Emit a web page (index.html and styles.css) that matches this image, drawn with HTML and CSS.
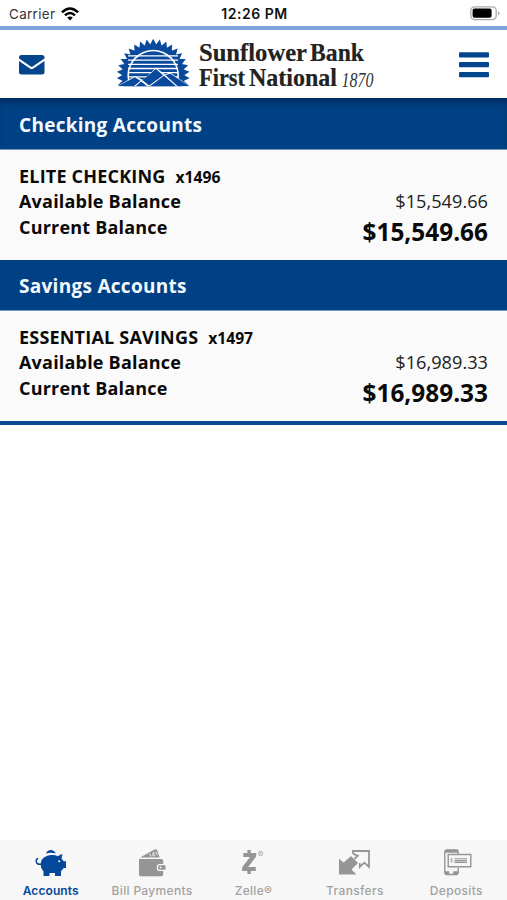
FILE: index.html
```html
<!DOCTYPE html>
<html lang="en">
<head>
<meta charset="utf-8">
<title>Accounts</title>
<link rel="stylesheet" href="styles.css">
</head>
<body>
<div class="app">
  <div class="status">
    <div class="carrier"><span>Carrier</span>
      <svg width="18" height="14" viewBox="0 0 18 14" fill="none" stroke="#000" stroke-width="2.4"><path d="M.9 5.3Q9-2.5 17.1 5.3M4 8.4Q9 3.7 14 8.4"/><path d="M6.2 10.6Q9 8.2 11.8 10.6L9 13.5Z" fill="#000" stroke="none"/></svg>
    </div>
    <div class="time">12:26 PM</div>
    <svg class="battery" width="30" height="15" viewBox="0 0 30 15"><rect x=".8" y=".8" width="25.4" height="12.8" rx="3.8" fill="#fff" stroke="#aaa" stroke-width="1.3"/><rect x="2.6" y="2.6" width="19" height="9.2" rx="2" fill="#000"/><path d="M28 5Q31 7.2 28 9.5Z" fill="#aaa"/></svg>
  </div>
  <header class="header">
    <svg class="mail" width="26" height="20" viewBox="0 0 26 20" fill="#04468e"><path d="M0 2.5Q0 0 2.5 0H23Q25.5 0 25.5 2.5V3.5L13.7 11.5Q12.7 12 11.8 11.5L0 3.5Z"/><path d="M0 6L11 13.5Q12.7 14.5 14.4 13.5L25.5 6V17Q25.5 19.5 23 19.5H2.5Q0 19.5 0 17Z"/></svg>
    <svg class="logo" width="270" height="56" viewBox="114 36 270 56">
      <defs>
        <path id="t" d="M149.6 46L153.2 39L156.8 46Z"/>
        <g id="fan"><use href="#t"/><use href="#t" transform="rotate(10.5 153.2 75.5)"/><use href="#t" transform="rotate(21 153.2 75.5)"/><use href="#t" transform="rotate(31.5 153.2 75.5)"/><use href="#t" transform="rotate(42 153.2 75.5)"/><use href="#t" transform="rotate(52.5 153.2 75.5)"/><use href="#t" transform="rotate(63 153.2 75.5)"/><use href="#t" transform="rotate(73.5 153.2 75.5)"/><use href="#t" transform="rotate(84 153.2 75.5)"/><use href="#t" transform="rotate(94.5 153.2 75.5)"/><use href="#t" transform="rotate(105 153.2 75.5)"/></g>
        <clipPath id="base"><path d="M114 36H194V86.3H114Z"/></clipPath>
      </defs>
      <g clip-path="url(#base)" fill="#0a4a9c">
        <use href="#fan"/><use href="#fan" transform="translate(306.4 0) scale(-1 1)"/>
        <circle cx="153.2" cy="75.5" r="31"/>
        <circle cx="153.2" cy="75.5" r="25.8" fill="#fff"/>
        <circle cx="153.2" cy="75.5" r="24.2"/>
        <path d="M128 55.9H178M128 60.1H178M128 64.3H178M128 68.5H178M128 72.7H178M128 76.9H178" stroke="#fff" stroke-width="1.3"/>
        <path d="M115 87.5L135 76L143 80L156 67.7L165 74.5L170 72.6L192 87.5Z" fill="#fff"/>
        <path d="M117 86.5L134.8 77.3L140.5 80.7L133.5 86.5ZM135.2 86.5L141.2 81.6L147.5 86.5ZM142.5 80.2L155.8 68.9L163.2 75.2L149.2 85.4ZM149.6 86.5L164 75.8L176.4 86.5ZM165.3 75.1L170.5 73.8L190 86.5H178Z"/>
      </g>
      <g class="wordmark">
        <text x="199" y="61" textLength="108" lengthAdjust="spacingAndGlyphs">Sunflower</text>
        <text x="310" y="61" textLength="54" lengthAdjust="spacingAndGlyphs">Bank</text>
        <text x="199" y="86" textLength="46" lengthAdjust="spacingAndGlyphs">First</text>
        <text x="249" y="86" textLength="88" lengthAdjust="spacingAndGlyphs">National</text>
      </g>
      <text class="year" x="341.5" y="87" textLength="32" lengthAdjust="spacingAndGlyphs">1870</text>
    </svg>
    <svg class="menu" width="30" height="26" viewBox="0 0 30 26" fill="#04468e"><rect y=".2" width="30" height="5.3" rx="1"/><rect y="10" width="30" height="5.3" rx="1"/><rect y="19.9" width="30" height="5.3" rx="1"/></svg>
  </header>
  <main>
    <h2 class="first">Checking Accounts</h2>
    <section class="account">
      <div class="name">ELITE CHECKING <small>x1496</small></div>
      <div class="row"><span>Available Balance</span><span class="available">$15,549.66</span></div>
      <div class="row"><span>Current Balance</span><span class="current">$15,549.66</span></div>
    </section>
    <h2>Savings Accounts</h2>
    <section class="account last">
      <div class="name">ESSENTIAL SAVINGS <small>x1497</small></div>
      <div class="row"><span>Available Balance</span><span class="available">$16,989.33</span></div>
      <div class="row"><span>Current Balance</span><span class="current">$16,989.33</span></div>
    </section>
  </main>
  <nav class="tabs">
    <div class="tab active">
      <svg width="32" height="30" viewBox="0 0 32 30"><path fill="currentColor" d="M11 5.5A5 5 0 0 1 20.6 5.5Q15.5 3.8 11 5.5ZM7 11.5Q10 7.5 15.8 7Q20 6.5 23 8.2Q25 6.5 27.5 6.3L26.5 10.5L28.7 13.3H31V20H28.7Q27.5 22 26 23V28H20V25H14.5V28H8.5V23.3Q5.3 20 5.8 15Q6 13 7 11.5Z"/><path d="M6.5 16Q1.2 17 1.2 13Q1.2 10.5 3.3 10.6" fill="none" stroke="currentColor" stroke-width="1.5"/><circle cx="24.2" cy="13.3" r="1" fill="#f8f8f8"/></svg>
      <span>Accounts</span>
    </div>
    <div class="tab">
      <svg width="32" height="30" viewBox="0 0 32 30"><path fill="currentColor" d="M4 9.5L18.5 1.5Q20.5 .8 21.3 2.5L23.7 9.5ZM3 11H25.5Q27.2 11 27.2 12.8V16H23Q20.8 16 20.8 18.5V20.5Q20.8 23 23 23H27.2V26.5Q27.2 28.3 25.5 28.3H4.5Q3 28.3 3 26.5Z"/><path fill="currentColor" d="M23.5 17.2H29.5V21.8H23.5Q22 21.8 22 19.5Q22 17.2 23.5 17.2Z"/><circle cx="24.5" cy="19.5" r="1" fill="#f8f8f8"/><path d="M13.5 5.5L15 8.5M16.5 5L18 4.5L18 6.3L16.8 6.5L17.2 8L19 7.5M20 3.8L21.2 7.2" stroke="#eee" stroke-width="1" fill="none"/></svg>
      <span>Bill Payments</span>
    </div>
    <div class="tab">
      <svg class="zelle" width="32" height="30" viewBox="0 0 32 30"><path fill="currentColor" d="M12.4 2H15.8V5H21.2V8.5L13.2 19H20.8V23H15.8V26H12.4V23H7.2V19.2L15 9H8.3V5H12.4Z"/><circle cx="25.6" cy="5.5" r="2.3" fill="none" stroke="currentColor" stroke-width=".6"/><path d="M24.9 6.9V4.2H25.9Q27.2 5 25.6 5.6L26.6 6.9M24.9 5.6H25.6" stroke="currentColor" stroke-width=".5" fill="none"/></svg>
      <span>Zelle®</span>
    </div>
    <div class="tab">
      <svg width="32" height="30" viewBox="0 0 32 30"><path fill="currentColor" d="M0 10.8L4.7 14.4L12 8L19 15L12.5 21.5L17.5 26.4H0Z"/><path d="M13.9 5.5V3H30V19L25.4 14.7L20.8 19V14.9M13.9 5.7L18.8 7.7L15.3 11" fill="none" stroke="currentColor" stroke-width="1.8"/></svg>
      <span>Transfers</span>
    </div>
    <div class="tab">
      <svg width="32" height="30" viewBox="0 0 32 30" fill="none" stroke="currentColor"><path d="M18.2 6V4.2Q18.2 2 16 2H7Q4.8 2 4.8 4.2V24.3Q4.8 26.5 7 26.5H16Q18.2 26.5 18.2 24.3V20" stroke-width="1.4"/><path d="M5 3.2H18M5 24.8H9.3M13.2 24.8H18" stroke-width="3"/><path d="M8.2 6.5H30.8V18.7H8.2Z" stroke-width="1.4"/><path d="M12.5 10.8Q10.5 10.4 10.8 11.8L12.2 12.6Q12.5 14.4 10.5 13.8"/><path d="M14.5 10.8H27M14.5 12.6H27M14.5 14.4H27" stroke-width="1.1"/></svg>
      <span>Deposits</span>
    </div>
  </nav>
</div>
</body>
</html>
```
FILE: styles.css
```css
* { box-sizing: border-box; }
body { margin: 0; background: #fff; color: #0a0a0a; font-family: "Open Sans", sans-serif; }
.app { display: flex; flex-direction: column; width: 507px; height: 900px; }
.status {
  display: grid; grid-template-columns: 1fr auto 1fr; align-items: center;
  height: 30px; padding: 0 7px 0 9px; border-bottom: 4px solid #7da5dc;
  font: 13.4px/26px Inter, sans-serif; color: #111;
}
.carrier { display: flex; align-items: center; gap: 6px; letter-spacing: .35px; color: #333; }
.time { padding-top: 1px; font-size: 14px; font-weight: 600; letter-spacing: .55px; }
.battery { justify-self: end; }
.header { display: flex; align-items: center; height: 68px; padding: 0 18px 0 19px; }
.mail { margin-top: 1px; }
.logo { margin: 0 auto 0 69px; }
.wordmark { font: bold 25px "Liberation Serif", serif; fill: #222; stroke: #222; stroke-width: .2px; }
.year { font: italic 21px "Liberation Serif", serif; fill: #333; }
.menu { margin-top: 1px; }
main { flex: 1; }
h2 {
  height: 51px; margin: 0; padding-left: 19px;
  background: #004185; color: #f4f8ff; border-bottom: 1px solid #7298c0;
  font-size: 19px; font-weight: 700; line-height: 52px; letter-spacing: .28px;
}
.first { height: 52px; line-height: 54px; box-shadow: inset 0 7px 6px -3px #002b5c; }
.account { height: 110px; padding: 12px 19px 0 19px; background: #fafafa; font-size: 18px; font-weight: 700; line-height: 26px; letter-spacing: .2px; }
.name { padding-top: 1px; height: 26px; font-size: 18px; white-space: nowrap; }
.name small { font-size: 15.7px; margin-left: 5px; letter-spacing: 0; }
.row { display: flex; justify-content: space-between; height: 25.7px; }
.available { font-size: 18.2px; font-weight: 400; color: #222; letter-spacing: 0; }
.current { font-size: 24.4px; line-height: 35px; letter-spacing: 0; }
.last { height: 114px; border-bottom: 4px solid #0b4b91; }
.tabs { display: grid; grid-template-columns: repeat(5, 1fr); height: 60px; padding-top: 8px; background: #f7f7f7; }
.tab { display: flex; flex-direction: column; align-items: center; color: #959595; font: 500 12px/26px Inter, sans-serif; letter-spacing: .33px; }
.tab span { color: #a2a2a2; white-space: nowrap; }
.zelle { transform: translateX(-2px); }
.active, .active span { color: #04489a; }
.active span { font-weight: 600; letter-spacing: .1px; }
```
